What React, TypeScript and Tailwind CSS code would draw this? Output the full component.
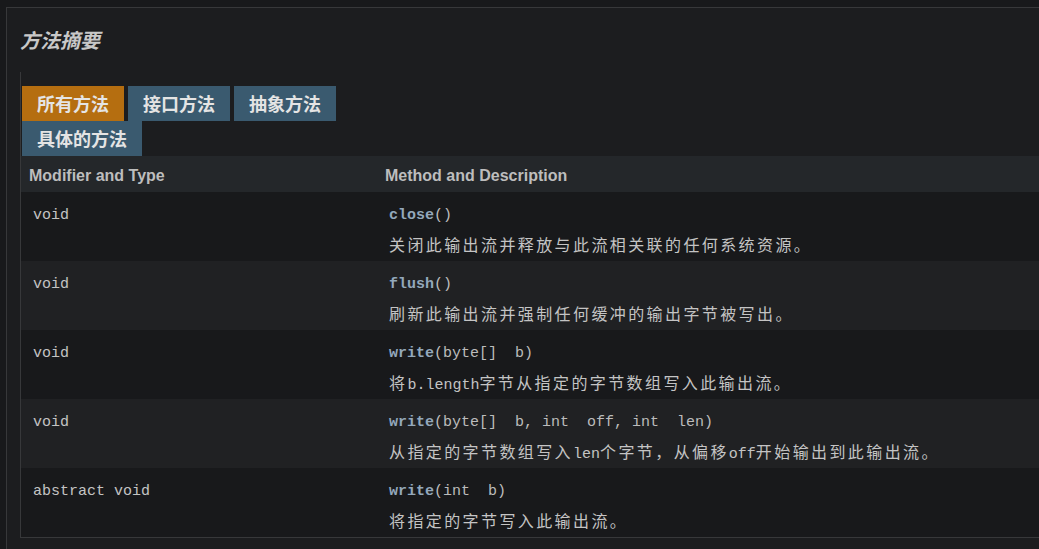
import React from "react";

const CJK = "font-['Noto_Sans_CJK_SC',sans-serif]";
const MONO = "font-['Liberation_Mono','Noto_Sans_CJK_SC',monospace]";

function Desc({ text }: { text: string }) {
  const runs: { ascii: boolean; s: string }[] = [];
  for (const ch of text) {
    const ascii = ch.charCodeAt(0) < 128;
    const last = runs[runs.length - 1];
    if (last && last.ascii === ascii) last.s += ch;
    else runs.push({ ascii, s: ch });
  }
  return (
    <div className="h-[28px] leading-[28px] text-[#c4c4c4] whitespace-pre">
      {runs.map((r, i) =>
        r.ascii ? (
          <span key={i} className={`${MONO} text-[15px] align-baseline`}>
            {r.s}
          </span>
        ) : (
          <span key={i} className={`${CJK} text-[16px] tracking-[2.4px] align-baseline`}>
            {r.s}
          </span>
        )
      )}
    </div>
  );
}

type Row = { type: string; name: string; args: string; desc: string };

const rows: Row[] = [
  { type: "void", name: "close", args: "", desc: "关闭此输出流并释放与此流相关联的任何系统资源。" },
  { type: "void", name: "flush", args: "", desc: "刷新此输出流并强制任何缓冲的输出字节被写出。" },
  { type: "void", name: "write", args: "byte[]  b", desc: "将b.length字节从指定的字节数组写入此输出流。" },
  {
    type: "void",
    name: "write",
    args: "byte[]  b, int  off, int  len",
    desc: "从指定的字节数组写入len个字节，从偏移off开始输出到此输出流。",
  },
  { type: "abstract void", name: "write", args: "int  b", desc: "将指定的字节写入此输出流。" },
];

function Tab({ label, active }: { label: string; active?: boolean }) {
  return (
    <div
      className={`h-[35px] px-[15px] flex items-center ${CJK} text-[18px] font-bold text-[#e4e4e4] ${
        active ? "bg-[#b56e10]" : "bg-[#3a5a6f]"
      }`}
    >
      {label}
    </div>
  );
}

export default function App() {
  return (
    <div className="w-[1039px] h-[549px] overflow-hidden bg-[#18191b]">
      <div className="ml-[6px] mt-[7px] h-[600px] border-l border-t border-[#37383a] bg-[#1c1d1f] pl-[13px]">
        <div
          className={`h-[64px] flex items-center ${CJK} text-[20px] font-bold italic text-[#c8c8c8]`}
        >
          方法摘要
        </div>
        <div className="border-l border-b border-[#37383a] pt-[14px]">
          <div className="ml-[1px] flex gap-[4px]">
            <Tab label="所有方法" active />
            <Tab label="接口方法" />
            <Tab label="抽象方法" />
          </div>
          <div className="ml-[1px] flex">
            <Tab label="具体的方法" />
          </div>
          <div className="grid grid-cols-[356px_1fr] h-[36px] items-center pt-[4px] bg-[#24272a] font-['Liberation_Sans',sans-serif] text-[16px] font-bold text-[#bdbdbd]">
            <div className="pl-[8px]">Modifier and Type</div>
            <div className="pl-[8px]">Method and Description</div>
          </div>
          {rows.map((r, i) => (
            <div
              key={i}
              className={`grid grid-cols-[356px_1fr] h-[69px] pt-[10px] ${
                i % 2 === 0 ? "bg-[#18191b]" : "bg-[#202123]"
              }`}
            >
              <div className={`pl-[12px] h-[28px] leading-[28px] ${MONO} text-[15px] text-[#c4c4c4] whitespace-pre`}>
                {r.type}
              </div>
              <div className="pl-[12px]">
                <div className={`h-[28px] leading-[28px] ${MONO} text-[15px] whitespace-pre`}>
                  <span className="font-bold text-[#93a8bb]">{r.name}</span>
                  <span className="text-[#bcbcbc]">({r.args})</span>
                </div>
                <Desc text={r.desc} />
              </div>
            </div>
          ))}
        </div>
      </div>
    </div>
  );
}
